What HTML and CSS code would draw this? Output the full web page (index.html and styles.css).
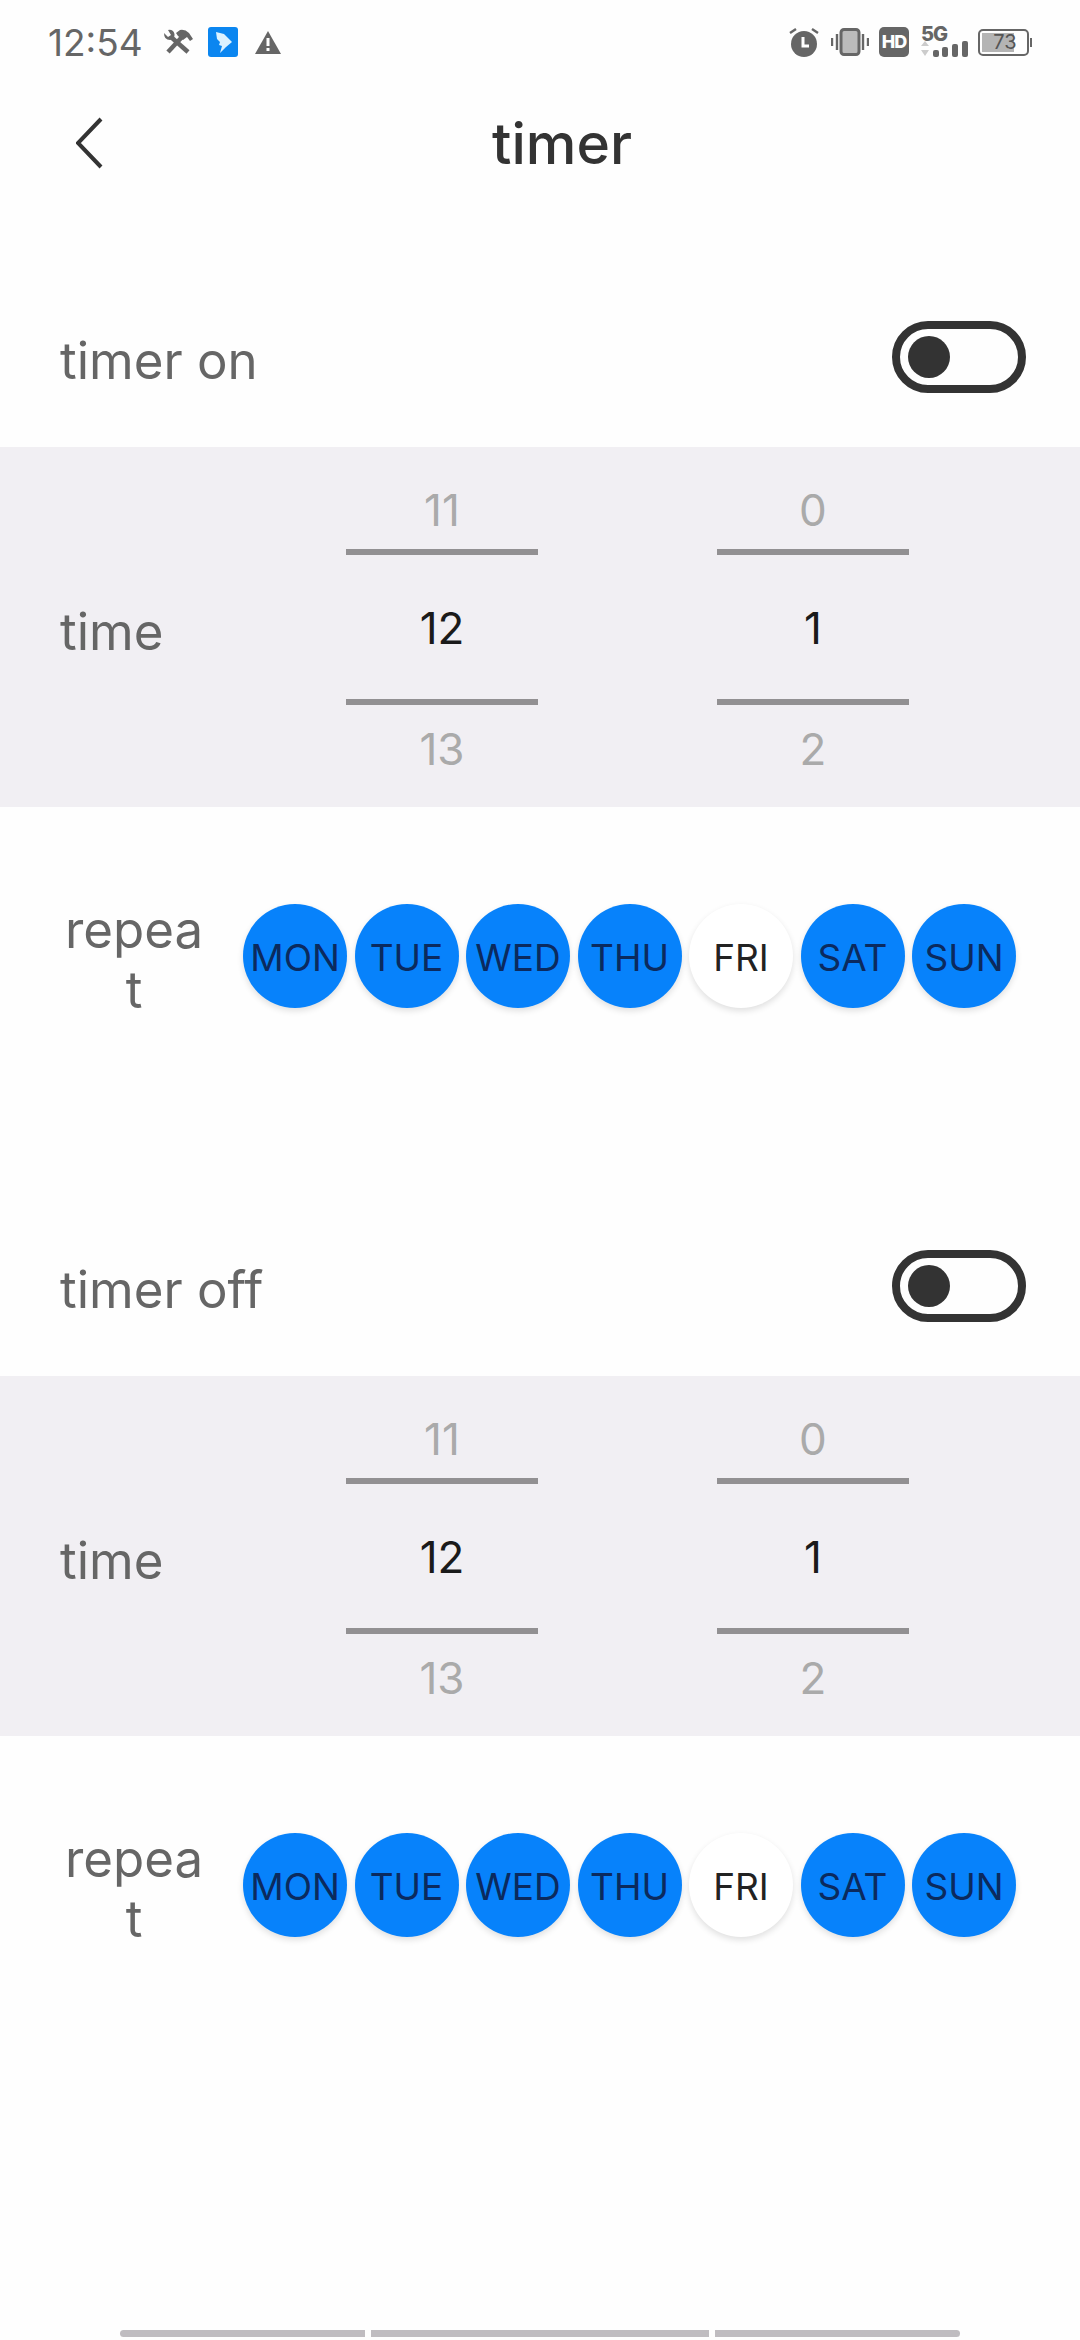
FILE: index.html
```html
<!DOCTYPE html>
<html lang="en">
<head>
    <meta charset="UTF-8">
    <meta name="viewport" content="width=device-width, initial-scale=1.0">
    <title>timer</title>
    <link rel="stylesheet" href="styles.css">
</head>
<body>
    <div class="status">
        <div class="status-left">
            <span class="clock">12:54</span>
            <svg class="ic-tools" viewBox="0 0 30 26">
                <!-- wrench -->
                <path d="M8 8 L25 23" stroke="#666" stroke-width="4.5" fill="none"/>
                <path d="M1 4 L5 8 L8 6 L5 1 Q10 0 11.5 5 Q12 10 7 11 Q1 11 1 4Z" fill="#666"/>
                <!-- hammer -->
                <path d="M5 23 L19 8" stroke="#666" stroke-width="4.5" fill="none"/>
                <path d="M13 4 L17 1 Q22 0 26 4 L30 10 L27 12 L24 8 L20 11 L15 7 Z" fill="#666"/>
            </svg>
            <svg class="ic-app" viewBox="0 0 30 30">
                <rect width="30" height="30" rx="3" fill="#0b86f0"/>
                <path d="M8 5 L16 7 L24 15 L18 20 L12 26 L14 19 L11 18 L12 15 L9 12 Z" fill="#dcf2ff"/>
            </svg>
            <svg class="ic-warn" viewBox="0 0 26 23">
                <path d="M13 0 L26 23 L0 23 Z" fill="#666"/>
                <rect x="11.5" y="7" width="3" height="8" fill="#fff"/>
                <rect x="11.5" y="17" width="3" height="3" fill="#fff"/>
            </svg>
        </div>
        <div class="status-right">
            <svg class="ic-alarm" viewBox="0 0 30 30">
                <circle cx="15" cy="17" r="13" fill="#666"/>
                <path d="M1 6 L7 2 M29 6 L23 2" stroke="#666" stroke-width="2.4"/>
                <path d="M14 10 V19 H20" stroke="#fff" stroke-width="3" fill="none"/>
            </svg>
            <svg class="ic-vib" viewBox="0 0 38 28">
                <rect x="10" y="1.5" width="18" height="25" rx="3" fill="#bbb" stroke="#666" stroke-width="3"/>
                <path d="M1 10 V18 M6 6 V22 M32 6 V22 M37 10 V18" stroke="#666" stroke-width="2.4"/>
            </svg>
            <div class="ic-hd">HD</div>
            <div class="net">
                <span class="net-label">5G</span>
                <svg class="net-bars" viewBox="0 0 47 16">
                    <path d="M4 0 L8 5 H0 Z M4 15 L8 9 H0 Z" fill="#ccc"/>
                    <rect x="12" y="9" width="6" height="7" rx="2" fill="#666"/>
                    <rect x="21" y="6" width="6" height="10" rx="2" fill="#666"/>
                    <rect x="31" y="3" width="6" height="13" rx="2" fill="#666"/>
                    <rect x="41" y="0" width="6" height="16" rx="2" fill="#666"/>
                </svg>
            </div>
            <div class="battery">
                <div class="battery-body">
                    <div class="battery-fill"></div>
                    <span class="battery-num">73</span>
                </div>
                <div class="battery-nub"></div>
            </div>
        </div>
    </div>

    <div class="header">
        <svg class="back" viewBox="0 0 27 52">
            <path d="M25 2 L2 26 L25 50" fill="none" stroke="#333" stroke-width="4"/>
        </svg>
        <div class="title">timer</div>
    </div>

    <div class="sections">
        <div class="section">
            <div class="head">
                <span class="label">timer on</span>
                <div class="toggle"><div class="knob"></div></div>
            </div>
            <div class="panel">
                <span class="label time-label">time</span>
                <div class="picker">
                    <div class="cell cell-top">11</div>
                    <div class="cell cell-mid">12</div>
                    <div class="cell cell-bot">13</div>
                </div>
                <div class="picker">
                    <div class="cell cell-top">0</div>
                    <div class="cell cell-mid">1</div>
                    <div class="cell cell-bot">2</div>
                </div>
            </div>
            <div class="repeat">
                <div class="label repeat-label">repeat</div>
                <div class="days">
                    <div class="day on">MON</div>
                    <div class="day on">TUE</div>
                    <div class="day on">WED</div>
                    <div class="day on">THU</div>
                    <div class="day">FRI</div>
                    <div class="day on">SAT</div>
                    <div class="day on">SUN</div>
                </div>
            </div>
        </div>

        <div class="section">
            <div class="head">
                <span class="label">timer off</span>
                <div class="toggle"><div class="knob"></div></div>
            </div>
            <div class="panel">
                <span class="label time-label">time</span>
                <div class="picker">
                    <div class="cell cell-top">11</div>
                    <div class="cell cell-mid">12</div>
                    <div class="cell cell-bot">13</div>
                </div>
                <div class="picker">
                    <div class="cell cell-top">0</div>
                    <div class="cell cell-mid">1</div>
                    <div class="cell cell-bot">2</div>
                </div>
            </div>
            <div class="repeat">
                <div class="label repeat-label">repeat</div>
                <div class="days">
                    <div class="day on">MON</div>
                    <div class="day on">TUE</div>
                    <div class="day on">WED</div>
                    <div class="day on">THU</div>
                    <div class="day">FRI</div>
                    <div class="day on">SAT</div>
                    <div class="day on">SUN</div>
                </div>
            </div>
        </div>
    </div>

    <div class="tabs">
        <div class="tab tab-a"></div>
        <div class="tab tab-b"></div>
        <div class="tab tab-c"></div>
    </div>
</body>
</html>
```

FILE: styles.css
```css
*{
    margin:0;
    padding:0;
    box-sizing:border-box;
}
body{
    width:1080px;
    height:2340px;
    background:#fefefe;
    font-family:"Inter", "Liberation Sans", sans-serif;
    display:flex;
    flex-direction:column;
    overflow:hidden;
}
/* status bar */
.status{
    height:84px;
    padding:0 48px 0 48px;
    display:flex;
    justify-content:space-between;
    align-items:center;
}
.status-left,.status-right{
    display:flex;
    align-items:center;
}
.clock{
    font-size:37px;
    color:#666;
    width:115px;
}
.ic-tools{
    width:30px;
    height:26px;
}
.ic-app{
    width:30px;
    height:30px;
    margin-left:15px;
}
.ic-warn{
    width:26px;
    height:23px;
    margin-left:17px;
}
.ic-alarm{
    width:30px;
    height:30px;
}
.ic-vib{
    width:38px;
    height:28px;
    margin-left:12px;
}
.ic-hd{
    width:30px;
    height:30px;
    margin-left:10px;
    border-radius:5px;
    background:#666;
    color:#fff;
    font-size:18px;
    font-weight:800;
    letter-spacing:-1px;
    line-height:30px;
    text-align:center;
}
.net{
    width:47px;
    margin-left:12px;
}
.net-label{
    display:block;
    font-size:20px;
    font-weight:800;
    letter-spacing:-1px;
    color:#666;
    line-height:14px;
}
.net-bars{
    display:block;
    width:47px;
    height:16px;
}
.battery{
    display:flex;
    align-items:center;
    margin-left:10px;
}
.battery-body{
    position:relative;
    width:51px;
    height:27px;
    padding:2px;
    border:2.5px solid #666;
    border-radius:5px;
}
.battery-fill{
    width:32px;
    height:100%;
    background:#b4b4b4;
}
.battery-num{
    position:absolute;
    left:0;
    right:0;
    top:0;
    padding-left:3px;
    text-align:center;
    font-size:20px;
    line-height:22px;
    color:#555;
}
.battery-nub{
    width:2px;
    height:9px;
    margin-left:1px;
    background:#666;
}
/* title bar */
.header{
    height:118px;
    display:flex;
    align-items:center;
    padding-left:76px;
}
.back{
    width:27px;
    height:52px;
    flex:none;
}
.title{
    width:918px;
    text-align:center;
    font-size:57px;
    font-weight:500;
    color:#333;
}
/* sections */
.sections{
    padding-top:64px;
    display:flex;
    flex-direction:column;
    gap:90px;
}
.head{
    height:181px;
    padding:8px 54px 0 60px;
    display:flex;
    justify-content:space-between;
    align-items:center;
}
.label{
    font-size:51px;
    color:#666;
}
.toggle{
    width:134px;
    height:72px;
    margin-top:-8px;
    border:8px solid #333;
    border-radius:36px;
    display:flex;
    align-items:center;
    padding-left:8px;
}
.knob{
    width:42px;
    height:42px;
    border-radius:50%;
    background:#333;
}
.panel{
    height:360px;
    background:#f1eff3;
    padding-left:60px;
    display:flex;
    align-items:center;
}
.time-label{
    width:286px;
    flex:none;
    padding-top:8px;
}
.picker{
    width:192px;
    flex:none;
    margin-right:179px;
    font-size:44px;
    text-align:center;
}
.cell{
    display:flex;
    justify-content:center;
    align-items:center;
}
.cell-top{
    height:108px;
    padding-top:24px;
    border-bottom:6px solid #929092;
    color:#aaa;
}
.cell-mid{
    height:150px;
    padding-top:2px;
    border-bottom:6px solid #929092;
    color:#1a1a1a;
}
.cell-bot{
    height:102px;
    padding-bottom:14px;
    color:#aaa;
}
.repeat{
    height:298px;
    display:flex;
    align-items:center;
    padding-left:60px;
}
.repeat-label{
    width:148px;
    padding-top:8px;
    line-height:60px;
    text-align:center;
    word-break:break-all;
}
.days{
    margin-left:35px;
    display:flex;
    gap:7.5px;
}
.day{
    width:104px;
    height:104px;
    padding-top:2px;
    border-radius:50%;
    background:#fff;
    color:#222;
    font-size:37px;
    display:flex;
    align-items:center;
    justify-content:center;
    box-shadow:0 3px 6px rgba(0,0,0,0.12);
    white-space:nowrap;
}
.day.on{
    background:#0782fb;
    color:#0b2a5e;
}
/* bottom bar */
.tabs{
    margin-top:auto;
    margin-bottom:3px;
    padding-left:120px;
    display:flex;
    gap:6px;
}
.tab{
    height:7px;
    background:#bfbcc0;
}
.tab-a{
    width:245px;
    border-radius:4px 0 0 4px;
}
.tab-b{
    width:338px;
}
.tab-c{
    width:245px;
    border-radius:0 4px 4px 0;
}
```
